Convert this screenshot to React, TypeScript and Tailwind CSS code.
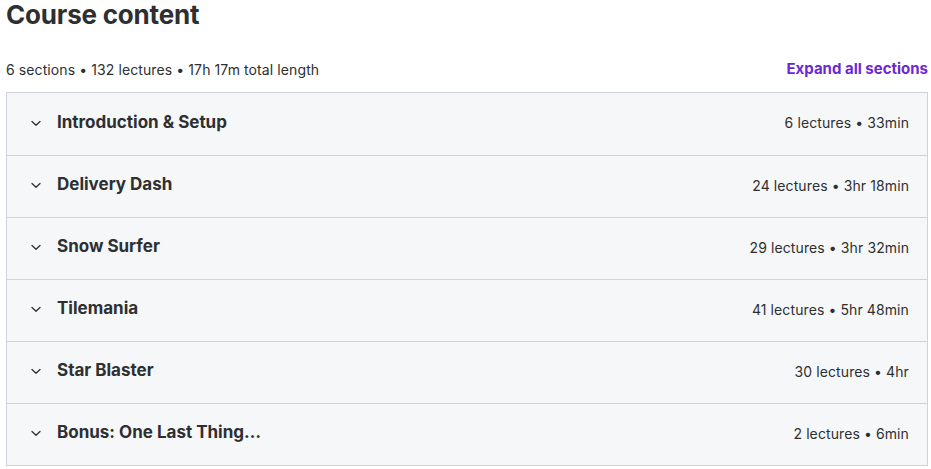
import React from "react";

const sections = [
  { title: "Introduction & Setup", meta: "6 lectures • 33min" },
  { title: "Delivery Dash", meta: "24 lectures • 3hr 18min" },
  { title: "Snow Surfer", meta: "29 lectures • 3hr 32min" },
  { title: "Tilemania", meta: "41 lectures • 5hr 48min" },
  { title: "Star Blaster", meta: "30 lectures • 4hr" },
  { title: "Bonus: One Last Thing…", meta: "2 lectures • 6min" },
];

function Chevron() {
  return (
    <svg width="12" height="12" viewBox="0 0 12 12" fill="none" className="shrink-0">
      <path d="M2 4.5 L6 8.2 L10 4.5" stroke="#2d2f31" strokeWidth="1.3" strokeLinecap="round" strokeLinejoin="round" />
    </svg>
  );
}

export default function App() {
  return (
    <div
      className="bg-white text-[#2d2f31] pl-[6px] pr-[3px] w-[931px] h-[469px] overflow-hidden"
      style={{ fontFamily: "Inter, 'Noto Sans', sans-serif" }}
    >
      <h2 className="text-[26px] leading-[30px] font-bold tracking-[-0.2px] text-[#2d2f31]">Course content</h2>
      <div className="flex items-center justify-between mt-[29px] h-[20px] text-[14px]">
        <span className="text-[#2d2f31] tracking-[0.1px]">6 sections • 132 lectures • 17h 17m total length</span>
        <span className="font-bold text-[15px] text-[#6d28d2]">Expand all sections</span>
      </div>
      <div className="mt-[13px] border border-[#d1d2e0]">
        {sections.map((s, i) => (
          <div
            key={s.title}
            className={`flex items-center justify-between bg-[#f6f7f9] h-[62px] pl-[23px] pr-[18px] pb-[3px] ${i > 0 ? "border-t border-[#d1d2e0]" : ""}`}
          >
            <div className="flex items-center gap-[15px]">
              <Chevron />
              <span className="text-[17px] font-bold text-[#2d2f31]">{s.title}</span>
            </div>
            <span className="text-[14px] text-[#2d2f31] tracking-[0.1px]">{s.meta}</span>
          </div>
        ))}
      </div>
    </div>
  );
}
